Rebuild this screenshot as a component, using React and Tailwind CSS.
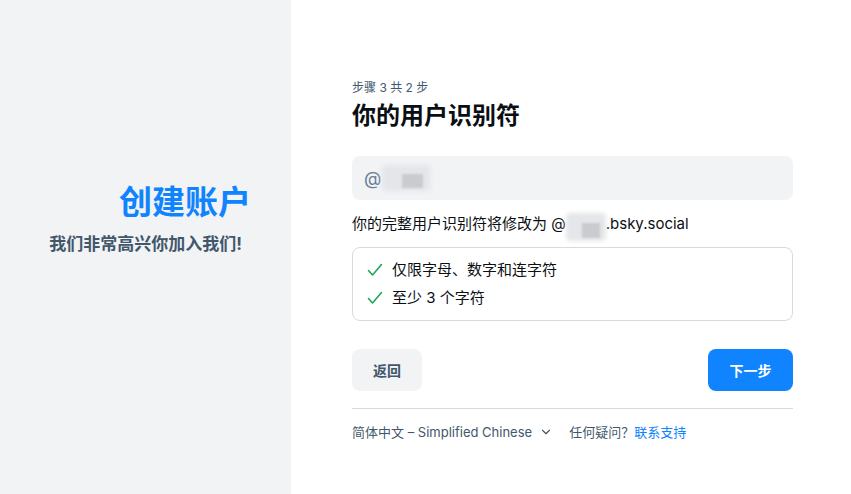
import { ChevronDown } from 'lucide-react';

function Blur({ className }) {
  return (
    <span className={`relative inline-block align-middle ${className}`}>
      <span className="absolute left-0 top-0 h-full w-full rounded bg-[#e4e6e9] blur-[2px]" />
      <span className="absolute left-[40%] top-[35%] h-[55%] w-[45%] bg-[#c9cbce] blur-[1px]" />
    </span>
  );
}

function Check() {
  return (
    <svg width="16" height="16" viewBox="0 0 16 16" fill="none" stroke="#20a55a" strokeWidth="1.6" strokeLinecap="round" strokeLinejoin="round">
      <path d="M1.5 8.5 L5.5 13 L14.5 2.5" />
    </svg>
  );
}

export default function App() {
  return (
    <div className="flex h-[494px] w-[851px] bg-white font-['Inter','Noto_Sans_CJK_SC',sans-serif]">
      {/* Left intro */}
      <div className="flex w-[291px] shrink-0 flex-col items-end justify-center bg-[#f1f3f5] pb-[57px] pr-[40px]">
        <h1 className="text-[33px] font-bold leading-[40px] text-[#1083fe]">创建账户</h1>
        <p className="mr-[9px] mt-[11px] text-[17px] font-bold leading-[22px] text-[#42576c]">我们非常高兴你加入我们!</p>
      </div>

      {/* Right form */}
      <div className="flex flex-1 flex-col pl-[61px] pt-[80px]">
        <div className="w-[441px]">
          <div className="text-[12px] leading-[16px] text-[#42576c]">步骤 3 共 2 步</div>
          <h2 className="mt-[4px] text-[24px] font-bold leading-[32px] text-[#0b0f14]">你的用户识别符</h2>

          <div className="mt-[24px] flex h-[44px] items-center rounded-lg bg-[#f1f3f5] px-[12px]">
            <span className="text-[18px] text-[#6b7f95]">@</span>
            <Blur className="ml-[1px] h-[26px] w-[48px]" />
          </div>

          <div className="mt-[14px] flex h-[20px] items-center text-[15px] leading-[20px] text-[#0b0f14]">
            你的完整用户识别符将修改为 @<Blur className="mt-[6px] h-[28px] w-[40px]" />.bsky.social
          </div>

          <div className="mt-[13px] flex flex-col gap-[8px] rounded-lg border border-[#d4dbe2] px-[14px] py-[12px]">
            <div className="flex items-center gap-[9px] text-[15px] leading-[20px] text-[#0b0f14]">
              <Check />
              仅限字母、数字和连字符
            </div>
            <div className="flex items-center gap-[9px] text-[15px] leading-[20px] text-[#0b0f14]">
              <Check />
              至少 3 个字符
            </div>
          </div>

          <div className="mt-[28px] flex items-center justify-between">
            <button className="h-[42px] w-[70px] rounded-lg bg-[#f1f3f5] text-[14px] font-bold text-[#42576c]">返回</button>
            <button className="h-[42px] w-[85px] rounded-lg bg-[#1083fe] text-[14px] font-bold text-white">下一步</button>
          </div>

          <div className="mt-[17px] border-t border-[#d4dbe2]" />

          <div className="mt-[14px] flex items-center text-[13px] leading-[18px] text-[#42576c]">
            <span>简体中文 – Simplified Chinese</span>
            <ChevronDown className="ml-[7px] h-[14px] w-[14px]" strokeWidth={2} />
            <span className="ml-[16px]">任何疑问？</span>
            <span className="text-[#1083fe]">联系支持</span>
          </div>
        </div>
      </div>
    </div>
  );
}
